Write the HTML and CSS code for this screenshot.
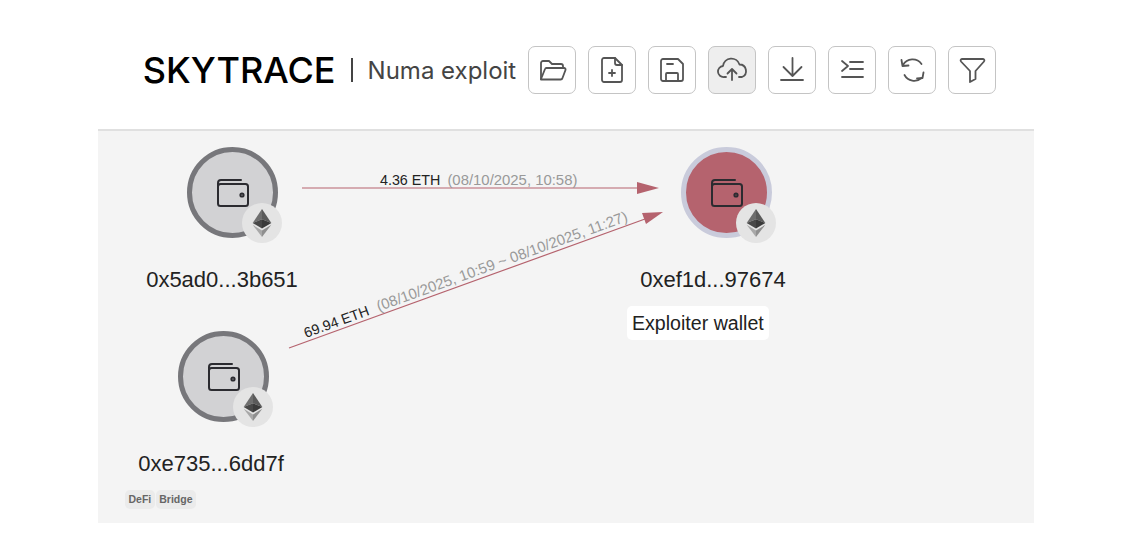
FILE: index.html
```html
<!DOCTYPE html>
<html lang="en">
<head>
  <meta charset="UTF-8">
  <title>Skytrace - Numa exploit</title>
  <link rel="stylesheet" href="styles.css">
</head>
<body>
  <svg class="defs">
    <defs>
      <symbol id="wallet" viewBox="0 0 32 28">
        <rect x="1" y="5" width="30" height="22" rx="2.5"/>
        <path d="M1 8V4a3 3 0 0 1 3-3h20"/>
        <circle class="dot" cx="25" cy="16" r="1.6"/>
      </symbol>
      <symbol id="eth" viewBox="0 0 20 30">
        <polygon fill="#6e6e6e" points="10,0 0,15 10,11"/>
        <polygon fill="#5a5a5a" points="10,0 20,15 10,11"/>
        <polygon fill="#484848" points="10,11 0,15 10,21"/>
        <polygon fill="#3a3a3a" points="10,11 20,15 10,21"/>
        <polygon fill="#a8a8a8" points="0,17 10,30 10,23"/>
        <polygon fill="#8f8f8f" points="20,17 10,30 10,23"/>
      </symbol>
    </defs>
  </svg>

  <header class="topbar">
    <h1 class="brand">SKYTRACE</h1>
    <span class="divider"></span>
    <span class="case-name">Numa exploit</span>
    <div class="toolbar">
      <button class="tool">
        <svg viewBox="0 0 32 32"><path d="M5 25V9a2 2 0 0 1 2-2h6l3 3h9a2 2 0 0 1 2 2v2"/><path d="M5 25l4-10a1.500 1.500 0 0 1 1.500-1H28a1.500 1.500 0 0 1 1.500 2l-3 8a2 2 0 0 1-2 1.500H5z"/></svg>
      </button>
      <button class="tool">
        <svg viewBox="0 0 32 32"><path d="M9 4h10l7 7v15a2 2 0 0 1-2 2H8a2 2 0 0 1-2-2V6a2 2 0 0 1 2-2z"/><path d="M19 4v5a2 2 0 0 0 2 2h5"/><path d="M16 16v6M13 19h6"/></svg>
      </button>
      <button class="tool">
        <svg viewBox="0 0 32 32"><path d="M7 5h15l5 5v15a2 2 0 0 1-2 2H7a2 2 0 0 1-2-2V7a2 2 0 0 1 2-2z"/><path d="M11 10h6"/><path d="M10 27v-7a1 1 0 0 1 1-1h10a1 1 0 0 1 1 1v7"/></svg>
      </button>
      <button class="tool tool-active">
        <svg viewBox="0 0 32 32"><path d="M10 23H8a5.500 5.500 0 0 1-1-11 8.500 8.500 0 0 1 16.500-1.500A6.500 6.500 0 0 1 26 23h-3"/><path d="M16 26V15M11.500 19.500L16 15l4.500 4.500"/></svg>
      </button>
      <button class="tool">
        <svg viewBox="0 0 32 32"><path d="M16.500 4v18M7.500 13l9 9 9-9"/><path d="M5 26h22"/></svg>
      </button>
      <button class="tool">
        <svg viewBox="0 0 32 32"><path d="M6 7l6 5-6 5"/><path d="M14 8h13M14 15h13M6 23h21"/></svg>
      </button>
      <button class="tool">
        <svg viewBox="0 0 32 32"><path d="M25.500 10A11 11 0 0 0 7 11"/><path d="M5.500 6l1 6 6-.5"/><path d="M8.500 21a11 11 0 0 0 17 3"/><path d="M21 24.500l5.500-.5 1-5.500"/></svg>
      </button>
      <button class="tool">
        <svg viewBox="0 0 32 32"><path d="M6 5h21a1.500 1.500 0 0 1 1 2.500L19.500 17v8L14 28V17L5 7.500A1.500 1.500 0 0 1 6 5z"/></svg>
      </button>
    </div>
  </header>

  <main class="canvas">
    <svg class="edges" viewBox="98 131 936 392">
      <line class="edge" x1="302" y1="188" x2="640" y2="188"/>
      <polygon class="arrow" points="659,188 637,182 637,194"/>
      <text class="edge-text" x="380" y="185">4.36 ETH<tspan class="edge-date" dx="7">(08/10/2025, 10:58)</tspan></text>

      <line class="edge" x1="289" y1="348" x2="645" y2="219"/>
      <polygon class="arrow" points="663,212 642,213 646,224"/>
      <text class="edge-text" transform="translate(306 338) rotate(-20)">69.94 ETH<tspan class="edge-date" dx="9">(08/10/2025, 10:59 ~ 08/10/2025, 11:27)</tspan></text>
    </svg>

    <div class="node node-a">
      <div class="circle">
        <svg class="wallet-icon"><use href="#wallet"/></svg>
        <span class="badge"><svg class="eth-icon"><use href="#eth"/></svg></span>
      </div>
      <div class="address">0x5ad0...3b651</div>
    </div>

    <div class="node node-b">
      <div class="circle">
        <svg class="wallet-icon"><use href="#wallet"/></svg>
        <span class="badge"><svg class="eth-icon"><use href="#eth"/></svg></span>
      </div>
      <div class="address">0xe735...6dd7f</div>
      <div class="tags">
        <span class="tag">DeFi</span>
        <span class="tag">Bridge</span>
      </div>
    </div>

    <div class="node node-c">
      <div class="circle circle-flagged">
        <svg class="wallet-icon"><use href="#wallet"/></svg>
        <span class="badge"><svg class="eth-icon"><use href="#eth"/></svg></span>
      </div>
      <div class="address">0xef1d...97674</div>
      <div class="note">Exploiter wallet</div>
    </div>
  </main>
</body>
</html>
```

FILE: styles.css
```css
body {
  margin: 0;
  background-color: #fff;
  font-family: "Liberation Sans", Arial, sans-serif;
  color: #222;
}
.defs {
  display: none;
}

/* header */
.topbar {
  display: flex;
  justify-content: center;
  align-items: center;
  height: 131px;
  box-sizing: border-box;
  padding: 12px 3px 1px 10px;
  margin: 0 104px 0 98px;
  border-bottom: 2px solid #e0e0e0;
}
.brand {
  margin: 0;
  font-family: Inter, sans-serif;
  font-size: 36px;
  font-weight: 500;
  color: #000;
}
.divider {
  width: 2px;
  height: 24px;
  margin: 0 15px 0 15px;
  background-color: #444;
}
.case-name {
  font-family: Inter, sans-serif;
  font-size: 24px;
  color: #444;
}
.toolbar {
  display: flex;
  gap: 12px;
  margin-left: 12px;
}
.tool {
  display: flex;
  justify-content: center;
  align-items: center;
  width: 48px;
  height: 48px;
  padding: 0;
  background-color: #fff;
  border: 1.5px solid #c4c4c4;
  border-radius: 7px;
}
.tool-active {
  background-color: #eeeeee;
}
.tool svg {
  width: 32px;
  height: 32px;
  fill: none;
  stroke: #555;
  stroke-width: 1.8;
  stroke-linecap: round;
  stroke-linejoin: round;
}

/* graph area */
.canvas {
  position: relative;
  width: 936px;
  height: 392px;
  margin-left: 98px;
  background-color: #f4f4f4;
}
.edges {
  position: absolute;
  left: 0;
  top: 0;
  width: 936px;
  height: 392px;
}
.edge {
  stroke: #b5636e;
  stroke-width: 1.2;
}
.arrow {
  fill: #b5636e;
}
.edge-text {
  font-size: 14.3px;
  fill: #222;
}
.edge-date {
  font-size: 14.9px;
  fill: #999;
}

.node {
  position: absolute;
  display: flex;
  flex-direction: column;
  align-items: center;
  width: 200px;
}
.node-a {
  left: 24px;
  top: 16px;
}
.node-b {
  left: 13px;
  top: 200px;
}
.node-c {
  left: 515px;
  top: 16px;
}
.circle {
  position: relative;
  display: flex;
  justify-content: center;
  align-items: center;
  width: 91px;
  height: 91px;
  margin-left: 24px;
  box-sizing: border-box;
  background-color: #d2d2d4;
  border: 5px solid #77777b;
  border-radius: 50%;
}
.node-a .circle {
  margin-left: 20px;
}
.node-c .circle {
  margin-left: 26px;
}
.circle-flagged {
  background-color: #b5636e;
  border-color: #c9cbdb;
}
.wallet-icon {
  width: 32px;
  height: 28px;
  margin-top: 1px;
  margin-left: 2px;
  fill: none;
  stroke: #2b2b30;
  stroke-width: 2;
  stroke-linecap: round;
}
.wallet-icon .dot {
  fill: #2b2b30;
  stroke: none;
}
.badge {
  position: absolute;
  right: -9px;
  bottom: -10px;
  display: flex;
  justify-content: center;
  align-items: center;
  width: 40px;
  height: 40px;
  background-color: #e4e4e4;
  border-radius: 50%;
}
.eth-icon {
  width: 20px;
  height: 28px;
}
.address {
  margin-top: 30px;
  font-size: 22px;
  line-height: 24px;
  color: #222;
}
.tags {
  display: flex;
  gap: 1px;
  align-self: flex-start;
  margin-top: 14px;
  margin-left: 14px;
}
.tag {
  padding: 3px 3.5px;
  background-color: #ebebeb;
  border-radius: 5px;
  font-size: 10.5px;
  line-height: 13px;
  font-weight: bold;
  color: #666;
}
.note {
  align-self: flex-start;
  margin-top: 14px;
  margin-left: 14px;
  padding: 6px 5px;
  background-color: #fff;
  border-radius: 5px;
  font-size: 19.6px;
  line-height: 22px;
  color: #222;
}
```
